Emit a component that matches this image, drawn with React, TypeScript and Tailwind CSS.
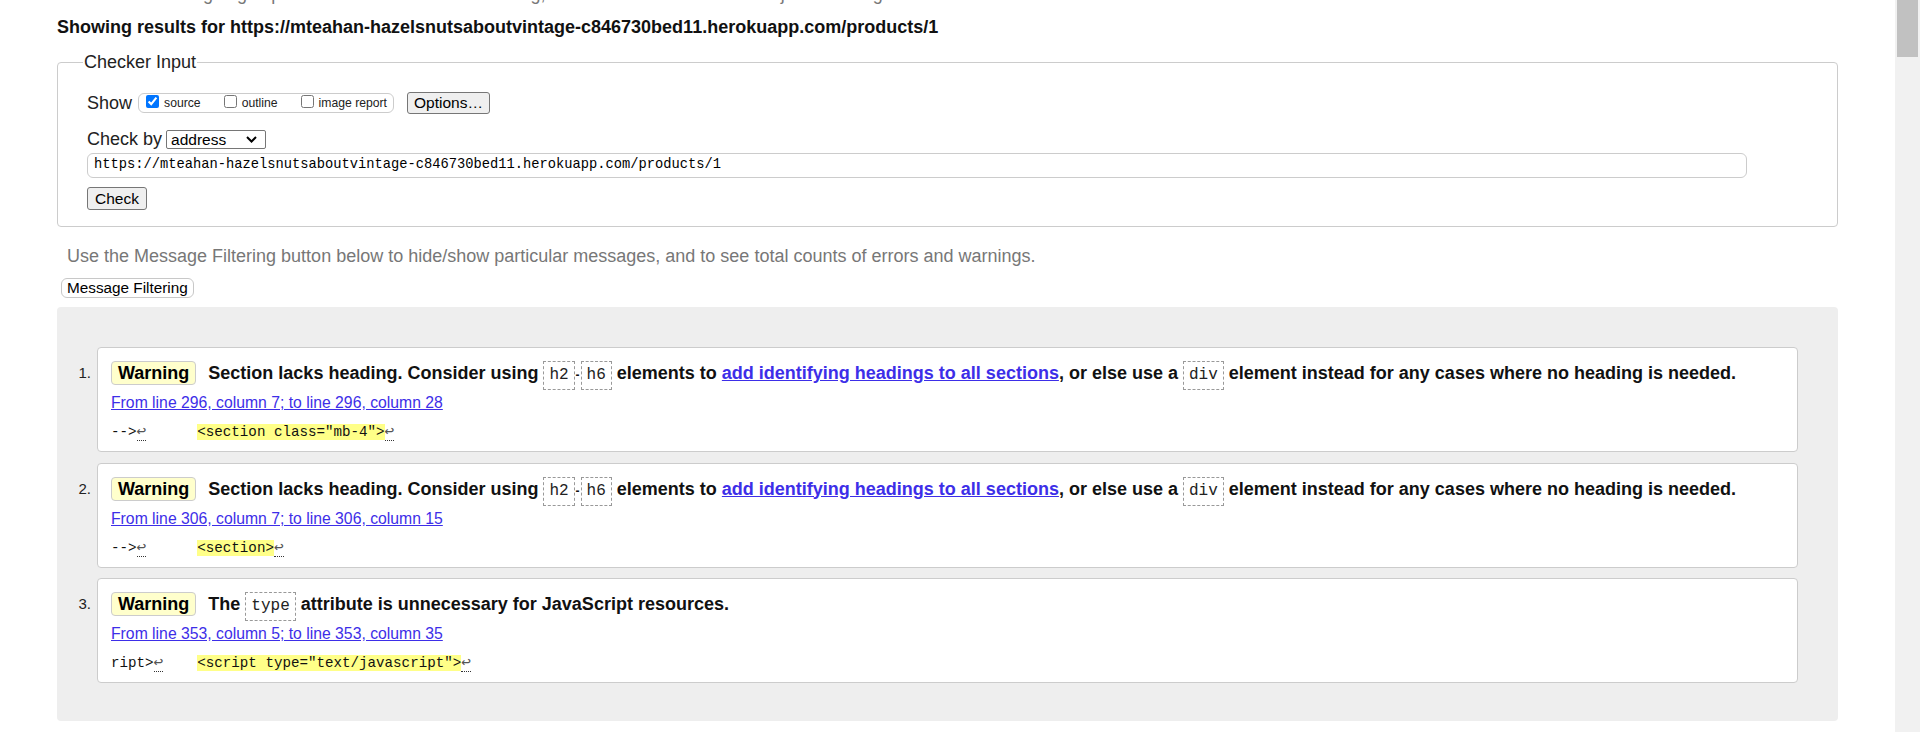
import React from "react"

const sans = "font-['Liberation_Sans',Arial,sans-serif]"
const mono = "font-['Liberation_Mono','DejaVu_Sans_Mono',monospace]"

const Code = ({ children }: { children: React.ReactNode }) => (
  <code
    className={`${mono} inline-block border border-dashed border-[#999] px-[5px] leading-[27px] text-[16px] font-normal text-[#222]`}
  >
    {children}
  </code>
)

const Lf = () => (
  <span className="inline-block leading-[16px] text-[16px] border-b border-dotted border-[#333] text-[#555]">↩</span>
)

interface Message {
  n: number
  text: React.ReactNode
  location: string
  before: string
  gap: string
  extract: string
}

const sectionMsg = (
  <>
    Section lacks heading. Consider using <Code>h2</Code>
    <span className="mx-[1px] text-[12px]">-</span>
    <Code>h6</Code> elements to{" "}
    <a href="#" className="text-[#3d2ee8] underline">
      add identifying headings to all sections
    </a>
    , or else use a <Code>div</Code> element instead for any cases where no heading is needed.
  </>
)

const messages: Message[] = [
  {
    n: 1,
    text: sectionMsg,
    location: "From line 296, column 7; to line 296, column 28",
    before: "-->",
    gap: "      ",
    extract: '<section class="mb-4">'
  },
  {
    n: 2,
    text: sectionMsg,
    location: "From line 306, column 7; to line 306, column 15",
    before: "-->",
    gap: "      ",
    extract: "<section>"
  },
  {
    n: 3,
    text: (
      <>
        The <Code>type</Code> attribute is unnecessary for JavaScript resources.
      </>
    ),
    location: "From line 353, column 5; to line 353, column 35",
    before: "ript>",
    gap: "    ",
    extract: '<script type="text/javascript">'
  }
]

const Checkbox = ({ checked, label }: { checked?: boolean; label: string }) => (
  <label className="flex items-center">
    <input
      type="checkbox"
      defaultChecked={checked}
      className="w-[13px] h-[13px] m-0 mb-[4px] accent-[#0075ff]"
    />
    <span className="ml-[5px] text-[12.2px] leading-[20px]">{label}</span>
  </label>
)

const App: React.FC = () => {
  return (
    <div className={`flex w-full h-[732px] overflow-hidden bg-white text-[#222] ${sans}`}>
      <main className="flex-1 px-[57px] text-[18px]">
        <p className="-mt-[19px] ml-[10px] leading-[26px] text-[#777] whitespace-nowrap">
          This tool is an ongoing experiment in better HTML checking, and its behavior remains subject to change
        </p>
        <h2 className="mt-[7px] leading-[26px] font-bold text-[#111] whitespace-nowrap">
          Showing results for https://mteahan-hazelsnutsaboutvintage-c846730bed11.herokuapp.com/products/1
        </h2>

        <fieldset className="mt-[9px] border border-[#ccc] rounded-[4px] pl-[29px] pt-[17px] pb-[16px]">
          <legend className="-ml-[4px] px-[1px] leading-[26px] text-[#222]">Checker Input</legend>

          <div className="flex items-center h-[22px]">
            <span>Show</span>
            <div className="ml-[6px] flex items-center h-[20px] border border-[#ccc] rounded-[6px] pl-[7px] pr-[6px]">
              <Checkbox checked label="source" />
              <div className="ml-[23px]">
                <Checkbox label="outline" />
              </div>
              <div className="ml-[23px]">
                <Checkbox label="image report" />
              </div>
            </div>
            <button className="ml-[13px] h-[22px] w-[83px] bg-[#efefef] border border-[#767676] rounded-[3px] text-[15.5px] leading-[20px] text-black">
              Options…
            </button>
          </div>

          <div className="flex items-center h-[20px] mt-[15px]">
            <span>Check by</span>
            <div className="ml-[4px] flex items-center justify-between w-[100px] h-[19px] border border-[#767676] rounded-[2px] pl-[4px] pr-[8px] text-[15.5px] text-black">
              <span className="leading-[17px]">address</span>
              <svg width="11" height="7" viewBox="0 0 11 7" fill="none">
                <polyline points="1,1 5.5,5.5 10,1" stroke="#000" strokeWidth="2" />
              </svg>
            </div>
          </div>

          <div
            className={`mt-[4px] flex items-center w-[1660px] h-[25px] border border-[#ccc] rounded-[6px] pl-[6px] ${mono} text-[13.75px] text-black`}
          >
            https://mteahan-hazelsnutsaboutvintage-c846730bed11.herokuapp.com/products/1
          </div>

          <button className="mt-[9px] block h-[23px] w-[60px] bg-[#efefef] border border-[#767676] rounded-[3px] text-[15.5px] leading-[21px] text-black">
            Check
          </button>
        </fieldset>

        <p className="mt-[16px] ml-[10px] leading-[26px] text-[#777] whitespace-nowrap">
          Use the Message Filtering button below to hide/show particular messages, and to see total counts of errors and
          warnings.
        </p>
        <button className="mt-[9px] ml-[4px] block h-[20px] px-[5px] bg-white border border-[#c8c8c8] rounded-[6px] text-[15.3px] leading-[18px] text-black">
          Message Filtering
        </button>

        <div className="mt-[9px] bg-[#eee] rounded-[4px] pt-[40px] pb-[38px] pr-[40px]">
          <ol className="flex flex-col gap-[10.5px]">
            {messages.map((m) => (
              <li key={m.n} className="flex">
                <span className="w-[40px] shrink-0 text-right pr-[6px] pt-[12px] text-[15px] leading-[28px] text-[#222]">
                  {m.n}.
                </span>
                <div className="flex-1 h-[105px] bg-white border border-[#ccc] rounded-[4px] px-[13px] pt-[11px]">
                  <p className="leading-[28px] font-bold text-[#111] whitespace-nowrap">
                    <strong className="inline-block bg-[#ffc] border border-[#ccc] rounded-[4px] px-[6px] leading-[22px] mr-[12px] text-black">
                      Warning
                    </strong>
                    {m.text}
                  </p>
                  <p className="mt-[2px] leading-[22px] text-[15.75px]">
                    <a href="#" className="text-[#3d2ee8] underline">
                      {m.location}
                    </a>
                  </p>
                  <p className={`mt-[7px] leading-[22px] ${mono} text-[14.2px] text-[#111] whitespace-pre`}>
                    {m.before}
                    <Lf />
                    {m.gap}
                    <b className="font-normal bg-[#ff8]">{m.extract}</b>
                    <Lf />
                  </p>
                </div>
              </li>
            ))}
          </ol>
        </div>
      </main>

      <div className="w-[25px] shrink-0 bg-[#f1f1f1] px-[2px]">
        <div className="h-[57px] bg-[#c1c1c1]" />
      </div>
    </div>
  )
}

export default App
